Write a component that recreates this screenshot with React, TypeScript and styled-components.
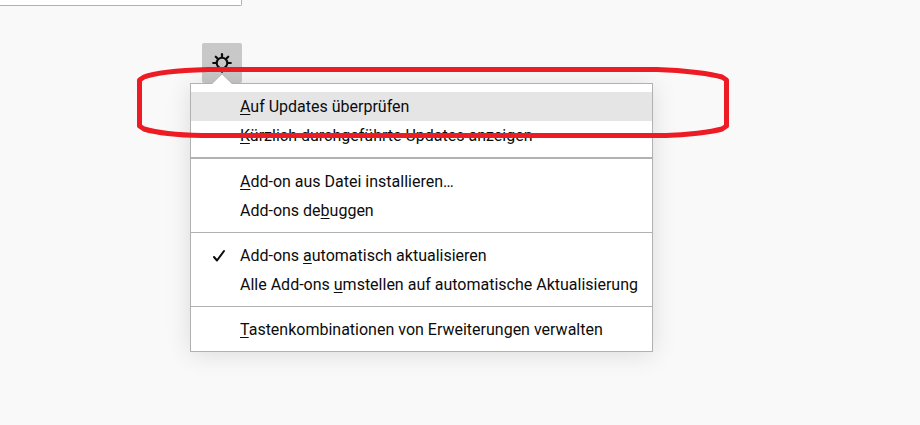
import React from 'react';
import styled, { createGlobalStyle } from 'styled-components';

const GlobalStyle = createGlobalStyle`
  *, *::before, *::after { box-sizing: border-box; }
  html, body { margin: 0; background: #f9f9f9; }
  body { overflow: hidden; }
  body, button, input { font-family: Roboto, "Noto Sans", sans-serif; font-size: 16px; color: #0c0c0d; }
`;

const Page = styled.main`
  position: relative;
  min-height: 100vh;
  background: #f9f9f9;
`;

const SearchField = styled.input`
  display: block;
  width: 242px;
  height: 6px;
  padding: 0;
  border: 1px solid #b1b1b1;
  border-width: 0 1px 1px 0;
  border-radius: 0 0 2px 0;
  background: #fff;
  outline: none;
`;

const Toolbar = styled.div`
  display: flex;
  padding: 37px 0 0 202px;
`;

const MenuAnchor = styled.div`
  position: relative;
`;

const GearButton = styled.button`
  display: flex;
  align-items: center;
  justify-content: center;
  width: 40px;
  height: 40px;
  padding: 0;
  border: 0;
  border-radius: 2px;
  background: #c8c8c8;
`;

const Menu = styled.div`
  position: absolute;
  top: 40px;
  left: -12px;
  min-width: 463px;
  border: 1px solid #b1b1b1;
  background: #fff;
  box-shadow: 0 2px 24px rgba(12, 12, 13, 0.12);
`;

const Arrow = styled.svg`
  position: absolute;
  top: -10px;
  left: 21px;
  display: block;
`;

const Group = styled.div<{ $divider?: number }>`
  padding: 8px 0 7px;
  border-bottom: ${(p) => p.$divider ?? 0}px solid #b1b1b1;
`;

const Item = styled.button<{ $active?: boolean }>`
  display: grid;
  grid-template-columns: 49px 1fr;
  align-items: center;
  width: 100%;
  height: 29px;
  padding: 0 12px 0 0;
  border: 0;
  background: ${(p) => (p.$active ? '#e5e5e5' : 'transparent')};
  line-height: 29px;
  text-align: left;
  white-space: nowrap;
`;

const Label = styled.span`
  grid-column: 2;
`;

const AccessKey = styled.span`
  text-decoration: underline;
  text-decoration-thickness: 1px;
  text-underline-offset: 2px;
  text-decoration-skip-ink: none;
`;

const CheckMark = styled.svg`
  justify-self: end;
  margin-right: 14px;
`;

const Marker = styled.svg`
  position: absolute;
  top: 66px;
  left: 136px;
  pointer-events: none;
`;

type Entry = { before?: string; keyChar: string; after: string; active?: boolean; checked?: boolean };

const groups: { divider?: number; entries: Entry[] }[] = [
  {
    divider: 2,
    entries: [
      { keyChar: 'A', after: 'uf Updates überprüfen', active: true },
      { keyChar: 'K', after: 'ürzlich durchgeführte Updates anzeigen' },
    ],
  },
  {
    divider: 1,
    entries: [
      { keyChar: 'A', after: 'dd-on aus Datei installieren…' },
      { before: 'Add-ons de', keyChar: 'b', after: 'uggen' },
    ],
  },
  {
    divider: 1,
    entries: [
      { before: 'Add-ons ', keyChar: 'a', after: 'utomatisch aktualisieren', checked: true },
      { before: 'Alle Add-ons ', keyChar: 'u', after: 'mstellen auf automatische Aktualisierung' },
    ],
  },
  { entries: [{ keyChar: 'T', after: 'astenkombinationen von Erweiterungen verwalten' }] },
];

const spokes = [0, 45, 90, 135, 180, 225, 270, 315];

export default function App() {
  return (
    <>
      <GlobalStyle />
      <Page>
        <SearchField type="search" aria-label="Add-ons suchen" />
        <Toolbar>
          <MenuAnchor>
            <GearButton aria-label="Einstellungen" aria-haspopup="menu" aria-expanded="true">
              <svg width="20" height="20" viewBox="0 0 20 20" fill="none" stroke="#0c0c0d" strokeWidth="2.2" strokeLinecap="round">
                <circle cx="10" cy="10" r="5.3" strokeWidth="2.1" />
                {spokes.map((a) => (
                  <path key={a} d="M10 4V1.2" transform={`rotate(${a} 10 10)`} />
                ))}
              </svg>
            </GearButton>
            <Menu role="menu">
              <Arrow width="20" height="11" viewBox="0 0 20 11">
                <path d="M0 10L10 0L20 10V11H0Z" fill="#fff" />
                <path d="M0 9.5L10 0L20 9.5" fill="none" stroke="#b1b1b1" strokeWidth="0.7" />
              </Arrow>
              {groups.map((group, i) => (
                <Group key={i} role="group" $divider={group.divider}>
                  {group.entries.map((e) => (
                    <Item
                      key={e.after}
                      role={e.checked ? 'menuitemcheckbox' : 'menuitem'}
                      aria-checked={e.checked}
                      $active={e.active}
                    >
                      {e.checked && (
                        <CheckMark width="14" height="14" viewBox="0 0 14 14" fill="none" stroke="#0c0c0d" strokeWidth="2" strokeLinecap="round" strokeLinejoin="round">
                          <path d="M2 8L5 11.5L12 2" />
                        </CheckMark>
                      )}
                      <Label>
                        {e.before}
                        <AccessKey>{e.keyChar}</AccessKey>
                        {e.after}
                      </Label>
                    </Item>
                  ))}
                </Group>
              ))}
            </Menu>
          </MenuAnchor>
        </Toolbar>
        <Marker width="594" height="73" viewBox="0 0 594 73" fill="none" stroke="#ed1c24" strokeWidth="5" strokeLinejoin="round" aria-hidden="true">
          <path d="M72 3.5H521C550 4.5 576 8 586 11L590.5 14V60L586 63C575 66 550 69 530 69.5H66C40 69 18 66 8 63L3.5 60V14L8 11C18 7 40 4.5 72 3.5Z" />
        </Marker>
      </Page>
    </>
  );
}
